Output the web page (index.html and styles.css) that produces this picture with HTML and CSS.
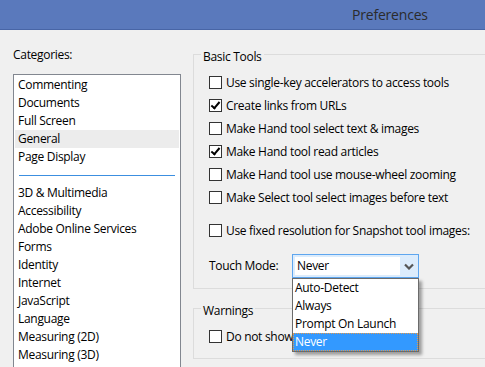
FILE: index.html
```html
<!DOCTYPE html>
<html lang="en">

<head>
    <meta charset="UTF-8">
    <meta name="viewport" content="width=device-width, initial-scale=1.0">
    <title>Preferences</title>
    <link rel="stylesheet" href="styles.css">
</head>

<body>
    <div class="title-bar">
        <span class="title">Preferences</span>
    </div>

    <div class="main">
        <div class="categories">
            <p class="cat-label">Categories:</p>
            <ul class="cat-list">
                <li>Commenting</li>
                <li>Documents</li>
                <li>Full Screen</li>
                <li class="selected">General</li>
                <li>Page Display</li>
                <li class="separator"></li>
                <li>3D &amp; Multimedia</li>
                <li>Accessibility</li>
                <li>Adobe Online Services</li>
                <li>Forms</li>
                <li>Identity</li>
                <li>Internet</li>
                <li>JavaScript</li>
                <li>Language</li>
                <li>Measuring (2D)</li>
                <li>Measuring (3D)</li>
            </ul>
        </div>

        <div class="settings">
            <div class="group">
                <span class="group-title">Basic Tools</span>
                <label class="check"><span class="box"></span>Use single-key accelerators to access tools</label>
                <label class="check"><span class="box checked"></span>Create links from URLs</label>
                <label class="check"><span class="box"></span>Make Hand tool select text &amp; images</label>
                <label class="check"><span class="box checked"></span>Make Hand tool read articles</label>
                <label class="check"><span class="box"></span>Make Hand tool use mouse-wheel zooming</label>
                <label class="check"><span class="box"></span>Make Select tool select images before text</label>
                <label class="check spaced"><span class="box"></span>Use fixed resolution for Snapshot tool images:</label>

                <div class="touch-row">
                    <span class="touch-label">Touch Mode:</span>
                    <div class="combo">
                        <div class="combo-field">Never</div>
                        <div class="combo-arrow">
                            <svg width="10" height="7" viewBox="0 0 10 7"><path d="M1 1.5 L5 5.5 L9 1.5" fill="none" stroke="#555" stroke-width="2.2"/></svg>
                        </div>
                        <ul class="combo-list">
                            <li>Auto-Detect</li>
                            <li>Always</li>
                            <li>Prompt On Launch</li>
                            <li class="active">Never</li>
                        </ul>
                    </div>
                </div>
            </div>

            <div class="group">
                <span class="group-title">Warnings</span>
                <label class="check"><span class="box"></span>Do not show edit warnings</label>
            </div>
        </div>
    </div>
</body>

</html>
```

FILE: styles.css
```css
* {
    font-family: "Segoe UI", "Open Sans", sans-serif;
    margin: 0;
    padding: 0;
    box-sizing: border-box;
}

body {
    width: 485px;
    height: 367px;
    overflow: hidden;
    background: #f0f0f0;
    font-size: 12px;
    line-height: 16px;
    letter-spacing: -0.3px;
    color: #000000;
}

.title-bar {
    height: 30px;
    background: #5a79bc;
    border-bottom: 1px solid #4865a6;
    display: flex;
    align-items: center;
    padding-left: 352px;
}

.title {
    font-size: 14px;
    letter-spacing: -0.2px;
    color: #2b2b2b;
}

.main {
    display: flex;
    gap: 12px;
    padding: 17px 0 0 13px;
}

.categories {
    width: 168px;
    flex-shrink: 0;
}

.cat-label {
    margin-bottom: 11px;
}

.cat-list {
    list-style: none;
    background: #ffffff;
    border: 1px solid #828790;
    padding-top: 1px;
    height: 400px;
}

.cat-list>li {
    height: 18px;
    line-height: 18px;
    margin: 0 1px;
    padding-left: 3px;
    white-space: nowrap;
}

.cat-list>li.selected {
    background: #ececec;
}

.cat-list>li.separator {
    height: 1px;
    background: #3c8fe0;
    margin: 9px 5px 8px;
}

.settings {
    width: 320px;
    flex-shrink: 0;
    padding-top: 7px;
}

.group {
    border: 1px solid #dcdcdc;
    padding: 0 0 10px 15px;
    margin-bottom: 19px;
}

.group-title {
    display: block;
    width: fit-content;
    background: #f0f0f0;
    margin: -6px 0 6px -8px;
    padding: 0 2px;
}

.check {
    display: flex;
    align-items: center;
    gap: 4px;
    height: 23px;
    white-space: nowrap;
}

.check.spaced {
    margin-top: 10px;
}

.box {
    width: 13px;
    height: 13px;
    flex-shrink: 0;
    border: 1px solid #333333;
    background: #ffffff;
    position: relative;
}

.box.checked::after {
    content: "";
    position: absolute;
    left: 3px;
    top: 0px;
    width: 3px;
    height: 7px;
    border: solid #000000;
    border-width: 0 2px 2px 0;
    transform: rotate(40deg);
}

.touch-row {
    display: flex;
    align-items: center;
    margin-top: 12px;
    height: 24px;
}

.touch-label {
    width: 83px;
}

.combo {
    position: relative;
    width: 127px;
    height: 24px;
    border: 1px solid #5ea6ef;
    background: #dcecfc;
    display: flex;
    align-items: center;
    padding: 2px 0 2px 2px;
}

.combo-field {
    width: 105px;
    height: 18px;
    background: #ffffff;
    padding-left: 2px;
    line-height: 18px;
}

.combo-arrow {
    flex: 1;
    display: flex;
    justify-content: center;
    align-items: center;
    padding-top: 1px;
}

.combo-list {
    position: absolute;
    left: -1px;
    top: 23px;
    width: 127px;
    list-style: none;
    background: #ffffff;
    border: 1px solid #6b6b6b;
    box-shadow: 3px 3px 3px rgba(0, 0, 0, 0.35);
    z-index: 2;
}

.combo-list>li {
    height: 18px;
    line-height: 18px;
    padding-left: 2px;
}

.combo-list>li.active {
    background: #3399ff;
    color: #ffffff;
    outline: 1px dotted #e49a4c;
    outline-offset: -1px;
}
```
